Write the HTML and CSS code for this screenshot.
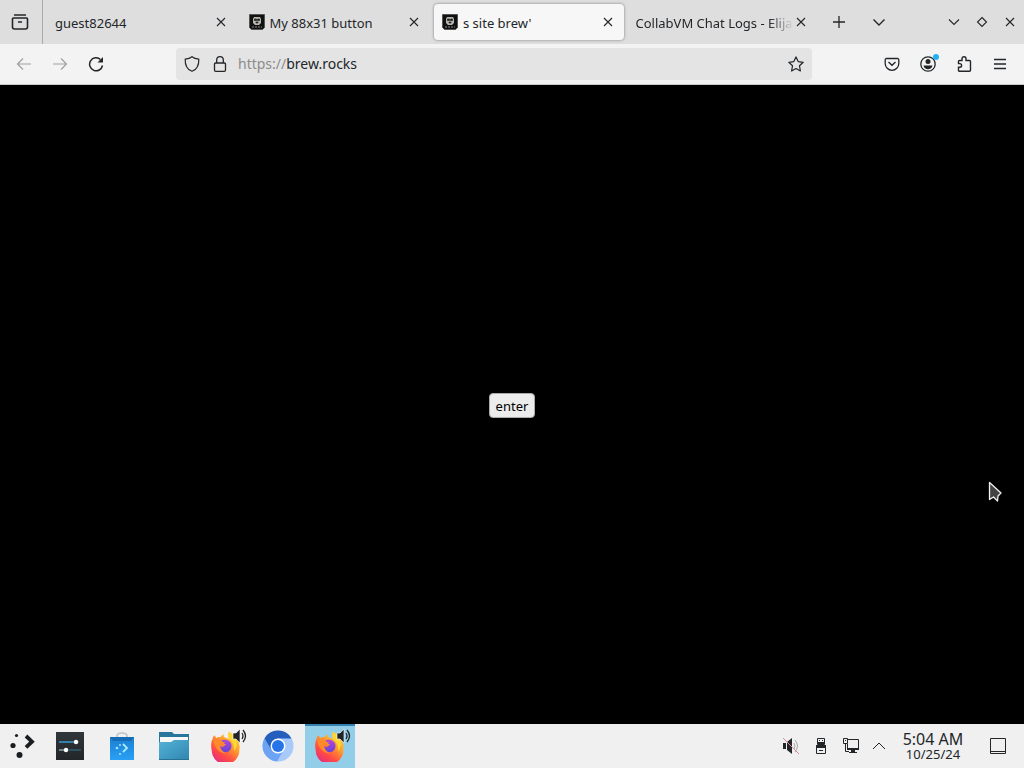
FILE: index.html
```html
<!DOCTYPE html>
<html lang="en">
<head>
<meta charset="utf-8">
<title>s site brew'</title>
<link rel="stylesheet" href="styles.css">
</head>
<body>
<svg class="defs" aria-hidden="true">
  <defs>
    <linearGradient id="fox" x1=".85" y1="0" x2=".2" y2="1"><stop offset="0" stop-color="#ffdf3b"/><stop offset=".4" stop-color="#ff9a2c"/><stop offset=".7" stop-color="#ff4a45"/><stop offset="1" stop-color="#e3288a"/></linearGradient>
    <linearGradient id="globe" x1="0" y1="0" x2="0" y2="1"><stop offset="0" stop-color="#b347d9"/><stop offset="1" stop-color="#6545d8"/></linearGradient>
    <linearGradient id="bag" x1="0" y1="0" x2="0" y2="1"><stop offset="0" stop-color="#1b7fd0"/><stop offset="1" stop-color="#2aa0f5"/></linearGradient>
    <linearGradient id="folder" x1="0" y1="0" x2="1" y2="1"><stop offset="0" stop-color="#55b2d6"/><stop offset="1" stop-color="#2f86b0"/></linearGradient>
    <linearGradient id="panel" x1="0" y1="0" x2="0" y2="1"><stop offset="0" stop-color="#31363b"/><stop offset="1" stop-color="#232629"/></linearGradient>
    <symbol id="x" viewBox="0 0 16 16"><path d="M4 4l8 8M12 4l-8 8"/></symbol>
    <symbol id="favicon" viewBox="0 0 16 16"><path d="M.5.500h15v13l-2 2h-11l-2-2z" fill="#111" stroke="#555"/><path d="M5 3h6l1 2v4l-2 2H6L4 9V5z" fill="#b5b5ad" stroke="none"/><path d="M5.500 5h2v1.500h-2zM8.500 5h2v1.500h-2zM7 8h2v1H7z" fill="#222" stroke="#222" stroke-width=".7"/><path d="M3 13h10" stroke="#888" stroke-dasharray="2 1"/></symbol>
    <symbol id="firefox" viewBox="0 0 36 36">
      <path d="M3 10c0-2 1-3 2-4l2 3c2-1 3-1 5-1 1-2 2-3 4-3-1 1-1 2 0 3l5 2c0-3-1-5 0-8 3 1 6 4 8 8l2 1c2 4 3 8 2 11a15.500 15.500 0 0 1-31 2C1 18 1 13 3 10z" fill="url(#fox)"/>
      <path d="M11 13c4-4 12-2 13 3s-2 9-7 9-7-4-6-8c1 2 3 3 5 1l2-2c-3 0-2-1-4-1-1 0-2-1-3-2z" fill="url(#globe)"/>
      <path d="M22 2c1 3 6 5 8 10 1 5-1 9-3 12 1-5-1-10-5-13-2-3-2-6 0-9z" fill="#ffd735"/>
      <path d="M4 12c3-2 7-2 9 0 1 1 2 2 4 2-1 2-4 2-5 3-1 3 1 7 6 9-7 1-13-6-14-14z" fill="#ff8a2b"/>
    </symbol>
    <symbol id="sound" viewBox="0 0 16 16"><path d="M1 5h3l4-4v14l-4-4H1z" fill="#202326" stroke="#fff" stroke-width=".6"/><path d="M10 5q2 3 0 6M11 2q5 6 0 12" fill="none" stroke="#202326" stroke-width="1.3"/></symbol>
  </defs>
</svg>
<div class="screen">
  <header>
    <nav class="tabbar" aria-label="Tabs">
      <button class="view" aria-label="Recent browsing"><svg class="icon" viewBox="0 0 18 18"><path d="M3 2h12M2.500 5h13a1 1 0 0 1 1 1v8a2 2 0 0 1-2 2h-11a2 2 0 0 1-2-2V6a1 1 0 0 1 1-1zM7 9h4" stroke-width="1.600"/></svg></button>
      <div class="tabs">
        <div class="tab"><a class="title" href="#">guest82644</a><button class="close" aria-label="Close guest82644"><svg class="icon small"><use href="#x"/></svg></button></div>
        <div class="tab"><svg class="fav"><use href="#favicon"/></svg><a class="title" href="#">My 88x31 button</a><button class="close" aria-label="Close My 88x31 button"><svg class="icon small"><use href="#x"/></svg></button></div>
        <div class="tab active"><svg class="fav"><use href="#favicon"/></svg><a class="title" href="#">s site brew'</a><button class="close" aria-label="Close s site brew"><svg class="icon small"><use href="#x"/></svg></button></div>
        <div class="tab"><a class="title faded" href="#">CollabVM Chat Logs - Elija</a><button class="close" aria-label="Close CollabVM Chat Logs"><svg class="icon small"><use href="#x"/></svg></button></div>
      </div>
      <button class="tool" aria-label="New tab"><svg class="icon small" viewBox="0 0 16 16"><path d="M8 2v12M2 8h12" stroke-width="1.300"/></svg></button>
      <button class="tool" aria-label="List all tabs"><svg class="icon small" viewBox="0 0 16 16"><path d="M2.500 5.500L8 11l5.500-5.500" stroke-width="1.400"/></svg></button>
      <div class="window">
        <button aria-label="Minimize"><svg class="icon small" viewBox="0 0 16 16"><path d="M3 5.500l5 5 5-5"/></svg></button>
        <button aria-label="Restore"><svg class="icon small" viewBox="0 0 16 16"><path d="M8 3.500L12.500 8 8 12.500 3.500 8z"/></svg></button>
        <button aria-label="Close window"><svg class="icon small"><use href="#x"/></svg></button>
      </div>
    </nav>
    <div class="toolbar">
      <button class="tool muted" aria-label="Back"><svg class="icon small" viewBox="0 0 16 16"><path d="M15 8H1.500M7 2.500L1.500 8 7 13.500" stroke-width="1.200"/></svg></button>
      <button class="tool muted" aria-label="Forward"><svg class="icon small" viewBox="0 0 16 16"><path d="M1 8h13.500M9 2.500L14.500 8 9 13.500" stroke-width="1.200"/></svg></button>
      <button class="tool" aria-label="Reload"><svg class="icon small" viewBox="0 0 16 16"><path d="M14.500 9.500a6.500 6.500 0 1 1-2-6" stroke-width="1.500"/><path d="M15 1v5.500H9.500z" fill="currentColor" stroke="none"/></svg></button>
      <form class="url">
        <svg class="icon small" viewBox="0 0 16 16"><path d="M8 .8C6 2.500 4 3 1.200 3.200 1 9 3 13.500 8 15.300c5-1.800 7-6.300 6.800-12.100C12 3 10 2.500 8 .8z" stroke-width="1.200"/></svg>
        <svg class="icon small" viewBox="0 0 16 16"><path d="M3.500 7h9a1 1 0 0 1 1 1v6a1.300 1.300 0 0 1-1.300 1.300H3.800A1.300 1.300 0 0 1 2.500 14V8a1 1 0 0 1 1-1zM4.700 7V4a3.300 3.300 0 0 1 6.600 0v3" stroke-width="1.300"/></svg>
        <a class="address" href="#"><span class="scheme">https://</span>brew.rocks</a>
        <button type="button" class="star" aria-label="Bookmark"><svg class="icon small" viewBox="0 0 16 16"><path d="M8 .9l2.200 4.700 5 .7-3.700 3.500.9 5.200L8 12.500 3.600 15l.9-5.200L.8 6.300l5-.7z" stroke-width="1.200" stroke-linejoin="round"/></svg></button>
      </form>
      <button class="tool" aria-label="Save to Pocket"><svg class="icon small" viewBox="0 0 16 16"><path d="M2.500 2.500h11a1.300 1.300 0 0 1 1.300 1.300V7.500a6.800 6.800 0 0 1-13.600 0V3.800a1.300 1.300 0 0 1 1.300-1.300zM4.500 6L8 9.300 11.500 6" stroke-width="1.300"/></svg></button>
      <button class="tool account" aria-label="Account"><svg class="icon small" viewBox="0 0 16 16"><circle cx="8" cy="8" r="7.200" stroke-width="1.300"/><circle cx="8" cy="5.600" r="2.500" fill="currentColor" stroke="none"/><path d="M3.500 9.500h9c-.5 2.500-2.300 3.700-4.500 3.700S4 12 3.500 9.500z" fill="currentColor" stroke="none"/></svg><span class="dot"></span></button>
      <button class="tool" aria-label="Extensions"><svg class="icon small" viewBox="0 0 16 16"><path d="M6 4.500V2.700a2 2 0 0 1 4 0v1.800h3.500a1 1 0 0 1 1 1v8.700a1 1 0 0 1-1 1h-10a1 1 0 0 1-1-1v-3h1.300a1.800 1.800 0 0 0 0-3.600H2.500V5.500a1 1 0 0 1 1-1z" stroke-width="1.400"/></svg></button>
      <button class="tool" aria-label="Menu"><svg class="icon small" viewBox="0 0 16 16"><path d="M2 3.500h12M2 8h12M2 12.500h12" stroke-width="1.300"/></svg></button>
    </div>
  </header>
  <main class="page">
    <button class="enter">enter</button>
    <svg class="cursor" viewBox="0 0 14 22"><path d="M1.500 1.500v17l4-2.500 4 4 .5-5 3-3z" fill="#444" stroke="#f2f2f2" stroke-width="1.300" stroke-linejoin="round"/></svg>
  </main>
  <footer class="taskbar">
    <button class="launcher" aria-label="Application launcher"><svg viewBox="0 0 28 28"><g fill="#1b1e20"><circle cx="8.500" cy="3.500" r="1.600"/><circle cx="5" cy="13.500" r="2.600"/><circle cx="11.500" cy="23" r="3"/></g><path d="M18 4l6 5.700-6 5.700" fill="none" stroke="#1b1e20" stroke-width="3.800"/></svg></button>
    <button class="task" aria-label="System settings"><svg viewBox="0 0 32 32"><path d="M2 2h28v28H2z" fill="url(#panel)"/><path d="M5 12h20M12 20h15" stroke="#2d7894"/><path d="M5 12h15" stroke="#3daee9"/><path d="M5 20h7" stroke="#b8d9e2"/><circle cx="22" cy="12" r="2.200" fill="#fff"/><circle cx="12" cy="20" r="2.200" fill="#fff"/></svg></button>
    <button class="task" aria-label="Discover"><svg viewBox="0 0 32 32"><path d="M11 9V6q0-3 5-3t5 3v3" fill="none" stroke="#b8c3ca" stroke-width="1.500"/><path d="M4 7h24v23H4z" fill="url(#bag)"/><path d="M4 7h24l-3 4H7z" fill="#176cb8"/><path d="M17 14l4 4-4 4" fill="none" stroke="#a6eaff" stroke-width="1.800"/><circle cx="11" cy="18" r="1.300" fill="#9ce5ff"/><circle cx="14" cy="15" r="1" fill="#9ce5ff"/><circle cx="14" cy="24" r="1.100" fill="#9ce5ff"/></svg></button>
    <button class="task" aria-label="Files"><svg viewBox="0 0 32 32"><path d="M1 2h13l2 2h15v20H1z" fill="#28769c"/><path d="M2 7h28v10H2z" fill="#f7f7f7"/><path d="M1 12h12l3-2h15v20H1z" fill="url(#folder)"/><path d="M1 29.500h30" stroke="#277197"/></svg></button>
    <button class="task" aria-label="Firefox"><svg><use href="#firefox"/></svg><svg class="sound"><use href="#sound"/></svg></button>
    <button class="task" aria-label="Chromium"><svg viewBox="0 0 32 32"><circle cx="16" cy="16" r="15.500" fill="#a7cafb"/><path d="M2.600 8.300A15.500 15.500 0 0 0 15 31.500l7-12-6-3.500z" fill="#6ca3f2"/><path d="M16 8.500h13.500a15.500 15.500 0 0 0-26.900-.2L9.500 20z" fill="#245fbd"/><circle cx="16" cy="16" r="7.500" fill="#fff"/><circle cx="16" cy="16" r="6" fill="#2674e8"/></svg></button>
    <button class="task current" aria-label="Firefox, active window"><svg><use href="#firefox"/></svg><svg class="sound"><use href="#sound"/></svg></button>
    <div class="tray">
      <button aria-label="Volume muted"><svg viewBox="0 0 18 18"><path d="M1 6h3v6H1zM5 5l5-4v16l-5-4z" fill="#232629"/><path d="M12 6q2 3 0 6M13 3q5 6 0 12" fill="none" stroke="#aaa"/><path d="M1 1l16 16" stroke="#db8c91"/></svg></button>
      <button aria-label="Removable devices"><svg viewBox="0 0 18 18"><path d="M5.500 1.500h7v6h-7zM4.500 8.500h9v8h-9z" fill="none" stroke="#232629"/><path d="M6 5h6v3H6z" fill="#232629"/><path d="M7 3h1v1H7zM10 3h1v1h-1z" fill="#232629"/><path d="M4 8h10v3H4zM7 13h4v1H7z" fill="#232629"/></svg></button>
      <button aria-label="Network"><svg viewBox="0 0 18 18"><path d="M6 2.500h10.500v10H5.500V7M1.500 1.500h4v5h-4zM3.500 7v7.500H7" fill="none" stroke="#232629"/><path d="M5 11h12v2H5zM9 13h4v2h2v1H7v-1h2zM3 3h1v1H3z" fill="#232629"/></svg></button>
      <button class="expand" aria-label="Show hidden icons"><svg viewBox="0 0 18 18"><path d="M3 12l6-6 6 6" fill="none" stroke="#232629"/></svg></button>
    </div>
    <button class="clock"><time class="time">5:04 AM</time><time class="date">10/25/24</time></button>
    <button class="desktop" aria-label="Show desktop"><svg viewBox="0 0 18 18"><path d="M1.500 1.500h15v15h-15zM2 14.500h14" fill="none" stroke="#232629"/></svg></button>
  </footer>
</div>
</body>
</html>
```
FILE: styles.css
```css
* { box-sizing: border-box; }
body { margin: 0; font: 13px/20px "Noto Sans", sans-serif; color: #232629; }
button { border: 0; padding: 0; background: none; font: inherit; color: inherit; display: flex; align-items: center; justify-content: center; flex: none; }
a { color: inherit; text-decoration: none; }
svg { display: block; flex: none; }
.defs { position: absolute; width: 0; height: 0; }
.screen { min-height: 100vh; display: flex; flex-direction: column; }

.icon { width: 18px; height: 18px; fill: none; stroke: currentColor; stroke-width: 1.1; }
.small { width: 16px; height: 16px; }
.tabbar { height: 44px; display: flex; align-items: center; background: #dedede; }
.view { width: 43px; height: 44px; padding-right: 2px; border-right: 1px solid #aaa; }
.tabs { display: flex; flex: 0 1 776px; min-width: 0; gap: 4px; padding-left: 4px; padding-right: 2px; }
.tab { flex: 1 1 0; min-width: 0; height: 36px; padding: 0 8px; display: flex; align-items: center; border-radius: 4px; }
.tab.active { background: #f7f7f7; box-shadow: 0 0 3px rgba(0, 0, 0, .45); }
.fav { width: 16px; height: 16px; margin-right: 5px; fill: none; }
.title { flex: 1; min-width: 0; overflow: hidden; white-space: nowrap; padding-top: 1px; }
.faded { mask-image: linear-gradient(to left, transparent, #000 24px); }
.close { width: 16px; height: 16px; }
.tool { width: 36px; height: 36px; }
.tabbar .tool { width: 40px; }
.window { display: flex; gap: 12px; margin-left: auto; padding-right: 6px; }

.toolbar { height: 41px; display: flex; align-items: center; padding: 0 6px; background: #f3f3f3; border-bottom: 1px solid #c8c8c8; }
.muted { color: #a0a0a0; }
.url { flex: 1; min-width: 0; height: 32px; margin: 0 62px; padding: 0 8px; display: flex; align-items: center; gap: 12px; background: #e4e4e4; border-radius: 4px; }
.address { flex: 1; min-width: 0; font-size: 14px; margin-left: -2px; overflow: hidden; white-space: nowrap; }
.scheme { color: #8c8c8c; }
.account { position: relative; }
.dot { position: absolute; top: 8px; right: 7px; width: 6px; height: 6px; border-radius: 50%; background: #22b1ee; }

.page { flex: 1; position: relative; display: flex; align-items: center; justify-content: center; padding-top: 2px; background: #000; }
.enter { height: 25px; padding: 0 6px; border: 1px solid #aaa; border-radius: 4px; background: #ececec; color: #000; }
.cursor { position: absolute; right: 22px; top: 62%; width: 14px; height: 22px; }

.taskbar { height: 44px; display: flex; align-items: center; gap: 2px; background: #f0f0f0; }
.launcher { width: 43px; height: 44px; }
.launcher svg { width: 28px; height: 28px; }
.task { position: relative; width: 50px; height: 44px; }
.task svg { width: 32px; height: 32px; }
.task .sound { position: absolute; top: 4px; right: 3px; width: 16px; height: 16px; }
.current { background: #93cee9; border-top: 2px solid #3482b0; }
.current svg { margin-top: -2px; }
.tray { display: flex; margin-left: auto; gap: 12px; }
.tray svg, .desktop svg { width: 18px; height: 18px; }
.tray .expand { margin-left: -2px; }
.clock { flex-direction: column; width: 84px; margin-right: 12px; margin-left: 1px; font-size: 16px; line-height: 16px; }
.date { font-size: 13px; line-height: 14px; }
.desktop { margin-right: 17px; }
```
